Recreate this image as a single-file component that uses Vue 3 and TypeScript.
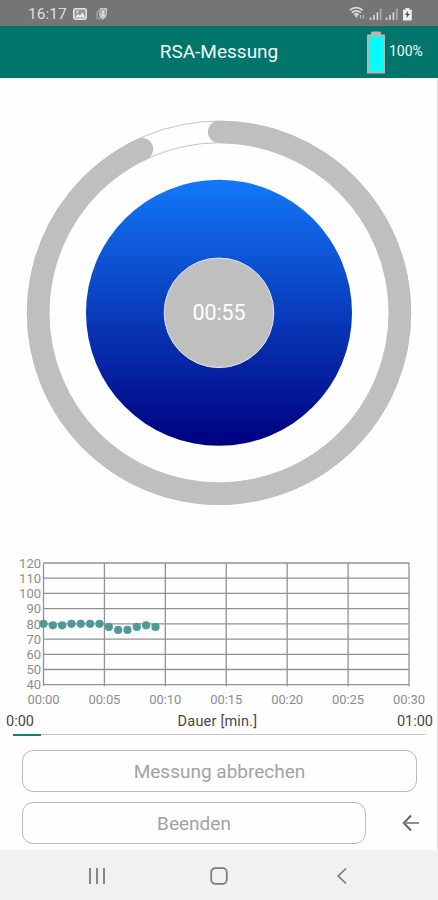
<script setup lang="ts">
const minValue = 40
const maxValue = 120
const plot = { left: 43.5, top: 13, width: 365.5, height: 121.7 }

const yTicks = [120, 110, 100, 90, 80, 70, 60, 50, 40]
const xTicks = ['00:00', '00:05', '00:10', '00:15', '00:20', '00:25', '00:30']
const samples = [80, 79, 79, 80, 80, 80, 80, 78, 76, 76, 78, 79, 78]
const sampleStep = 9.33

const yAt = (value: number): number =>
  plot.top + ((maxValue - value) / (maxValue - minValue)) * plot.height
const xAt = (index: number): number =>
  plot.left + (index / (xTicks.length - 1)) * plot.width
</script>

<template>
  <div class="screen">
    <div class="status">
      <span class="clock">16:17</span>
      <svg class="picture-icon" width="14" height="12" viewBox="0 0 14 12">
        <rect x="0.8" y="0.8" width="12.4" height="10.4" rx="1.6" fill="#999" stroke="#e2e2e2" stroke-width="1.6" />
        <path d="M2 9.5 L5 6 L7 7.6 L9.4 4.6 L12.2 9.5Z" fill="#ececec" />
        <circle cx="4.4" cy="3.8" r="1" fill="#ececec" />
      </svg>
      <svg class="app-icon" width="12" height="14" viewBox="0 0 12 14">
        <path d="M4 1 H10 Q11.3 1 11.2 3 L10.4 9 Q9 12 7 12.8 L4 10.5 L3 7Z" fill="#c9c9c9" />
        <path d="M3 2.5 L1 6 V12 M3.4 10 V13" stroke="#aaa" stroke-width="1.3" fill="none" />
        <circle cx="7.2" cy="5" r="2.3" fill="none" stroke="#777" stroke-width="0.8" />
        <path d="M7 3.5 V9" stroke="#eee" stroke-width="1.3" />
      </svg>
      <svg class="signals" width="64" height="16" viewBox="0 0 64 16">
        <g fill="none" stroke="#dedede" stroke-width="1.7">
          <path d="M0.8 4.2 Q7 -0.8 13.8 4.2" />
          <path d="M2.8 6.6 Q7.2 3 11.8 6.6" />
          <path d="M5 8.8 Q7.2 7 9.6 8.8" />
        </g>
        <path d="M5.6 9.3 H9 L7.3 12Z" fill="#dedede" />
        <path d="M11.5 9 V12.5 M14.5 9 V12.5" stroke="#bbb" stroke-width="1.3" />
        <g stroke="#d6d6d6" stroke-width="1.7">
          <path d="M21.6 11.5 V14 M25 9 V14 M28.4 6.3 V14" />
          <path d="M37.6 11.5 V14 M41 9 V14 M44.4 6.3 V14" />
        </g>
        <path d="M31.7 2.5 V14 M47.8 2.5 V14" stroke="#aaa" stroke-width="1.7" />
        <path d="M56.4 2 H60.4 V3.8 H62.8 V14.5 H54 V3.8 H56.4Z" fill="#ededed" />
        <path d="M59 4.7 L56 9 H58 L57.5 12 L61 7.7 H58.7Z" fill="#4d4d4d" />
      </svg>
    </div>

    <header class="bar">
      <h1 class="title">RSA-Messung</h1>
      <svg class="battery" width="18" height="43" viewBox="0 0 18 43">
        <rect x="4" y="0.5" width="10" height="5" rx="1" fill="#bbb5b2" />
        <rect x="1" y="4.5" width="16" height="37" fill="#00ffff" stroke="#bbb5b2" stroke-width="2" />
      </svg>
      <span class="percent">100%</span>
    </header>

    <main class="content">
      <svg class="dial" width="388" height="388" viewBox="25 119 388 388">
        <defs>
          <linearGradient id="pulse" x1="0" y1="0" x2="0" y2="1">
            <stop offset="0" stop-color="#1278f8" />
            <stop offset="1" stop-color="#000080" />
          </linearGradient>
        </defs>
        <g fill="none">
          <circle cx="219" cy="312.8" r="191.7" stroke="#c4c4c4" stroke-width="1" />
          <circle cx="219" cy="312.8" r="170" stroke="#c4c4c4" stroke-width="1" />
          <path d="M219 131.8 A181 181 0 1 1 142 149" stroke="#bfbfbf" stroke-width="22.2" stroke-linecap="round" />
        </g>
        <circle cx="219" cy="312.8" r="133" fill="url(#pulse)" />
        <circle cx="219" cy="312.8" r="54.8" fill="#bfbfbf" stroke="#e2e4ee" stroke-width="1" />
        <text class="time" x="219" y="320.2" text-anchor="middle" textLength="53">00:55</text>
      </svg>

      <svg class="chart" width="436" height="160" viewBox="0 0 436 160">
        <g class="grid">
          <line v-for="tick in yTicks" :key="tick" :x1="plot.left" :x2="plot.left + plot.width" :y1="yAt(tick)" :y2="yAt(tick)" />
          <line v-for="(label, i) in xTicks" :key="label" :x1="xAt(i)" :x2="xAt(i)" :y1="plot.top" :y2="plot.top + plot.height + 1.5" />
        </g>
        <text v-for="tick in yTicks" :key="tick" class="tick" x="41" :y="yAt(tick) + 4.7" text-anchor="end">{{ tick }}</text>
        <text v-for="(label, i) in xTicks" :key="label" class="tick" :x="xAt(i)" y="154" text-anchor="middle" textLength="32">{{ label }}</text>
        <circle v-for="(value, i) in samples" :key="i" :cx="plot.left + i * sampleStep" :cy="yAt(value)" r="4.1" class="dot" />
      </svg>

      <div class="labels">
        <span>0:00</span>
        <span class="duration">Dauer [min.]</span>
        <span class="end">01:00</span>
      </div>
      <div class="progress"><div class="progress-fill"></div></div>

      <button class="action" type="button">Messung abbrechen</button>
      <div class="row">
        <button class="action close" type="button">Beenden</button>
        <svg class="back" width="18" height="18" viewBox="0 0 18 18">
          <path d="M9 1.5 L1.8 9 L9 16.5" fill="none" stroke="#606060" stroke-width="1.9" />
          <path d="M2 9 H17" stroke="#858585" stroke-width="1.8" />
        </svg>
      </div>
    </main>

    <nav class="nav">
      <svg width="18" height="18" viewBox="0 0 18 18">
        <path d="M2 1 V17 M9 1 V17 M16 1 V17" stroke="#7c7c7c" stroke-width="1.8" />
      </svg>
      <svg width="18" height="18" viewBox="0 0 18 18">
        <rect x="1.2" y="1.2" width="15.6" height="15.6" rx="4" fill="none" stroke="#797979" stroke-width="1.7" />
      </svg>
      <svg width="18" height="18" viewBox="0 0 18 18">
        <path d="M14 1.5 L6.2 9 L14 16.5" fill="none" stroke="#797979" stroke-width="1.7" />
      </svg>
    </nav>
  </div>
</template>

<style>
body {
  margin: 0;
  background: #fff;
}
</style>

<style scoped>
.screen {
  display: flex;
  flex-direction: column;
  width: 438px;
  height: 900px;
  background: #fefefe;
  font-family: Roboto, sans-serif;
  overflow: hidden;
}

.status {
  display: flex;
  align-items: center;
  box-sizing: border-box;
  height: 26px;
  padding: 2px 25px 0 28px;
  background: #757575;
}

.clock {
  width: 45px;
  color: #dedede;
  font-size: 15.5px;
  line-height: 24px;
}

.app-icon {
  margin-left: 9px;
}

.signals {
  margin-left: auto;
}

.bar {
  display: grid;
  grid-template-columns: 366px 22px 1fr;
  align-items: center;
  height: 52px;
  flex: none;
  background: #00756b;
  color: #f2faf9;
}

.title {
  margin: 0;
  padding-left: 72px;
  text-align: center;
  font-size: 19px;
  font-weight: 400;
  line-height: 52px;
}

.battery {
  margin-left: 1px;
}

.percent {
  padding: 0 0 3px 1px;
  font-size: 14px;
}

.content {
  display: flex;
  flex: 1;
  flex-direction: column;
  box-sizing: border-box;
  padding-top: 41px;
  border-right: 1.5px solid #dedede;
}

.dial {
  flex: none;
  margin-left: 25px;
}

.time {
  fill: #fff;
  font-size: 21.5px;
}

.chart {
  flex: none;
  margin-top: 43px;
}

.grid line {
  stroke: #929292;
  stroke-width: 1.3;
}

.tick {
  fill: #8d8d8d;
  font-size: 13px;
}

.dot {
  fill: #4f9a98;
}

.labels {
  display: grid;
  grid-template-columns: 1fr auto 1fr;
  height: 22px;
  padding: 3px 4px 0 6px;
  color: #484848;
  font-size: 14.5px;
  line-height: 18px;
}

.duration {
  padding-right: 4px;
  letter-spacing: 0.2px;
}

.end {
  text-align: right;
}

.progress {
  height: 1.5px;
  margin: -1.5px 11px 0 13px;
  background: #c5c5c5;
}

.progress-fill {
  width: 28px;
  height: 2px;
  background: #16806f;
}

.action {
  box-sizing: border-box;
  width: 395px;
  height: 42px;
  margin: 15px 0 0 22px;
  padding: 0;
  border: 1.4px solid #bababa;
  border-radius: 11px;
  background: #fefefe;
  color: #a2a2a2;
  font: 400 19px Roboto, sans-serif;
}

.row {
  display: flex;
  align-items: center;
  margin-top: 10px;
}

.close {
  width: 344px;
  margin-top: 0;
}

.back {
  margin-left: 36px;
}

.nav {
  display: grid;
  grid-template-columns: 122px 122px 122px;
  justify-content: center;
  align-items: center;
  justify-items: center;
  height: 50px;
  padding-top: 1px;
  box-sizing: border-box;
  background: #f1f1f1;
}
</style>
